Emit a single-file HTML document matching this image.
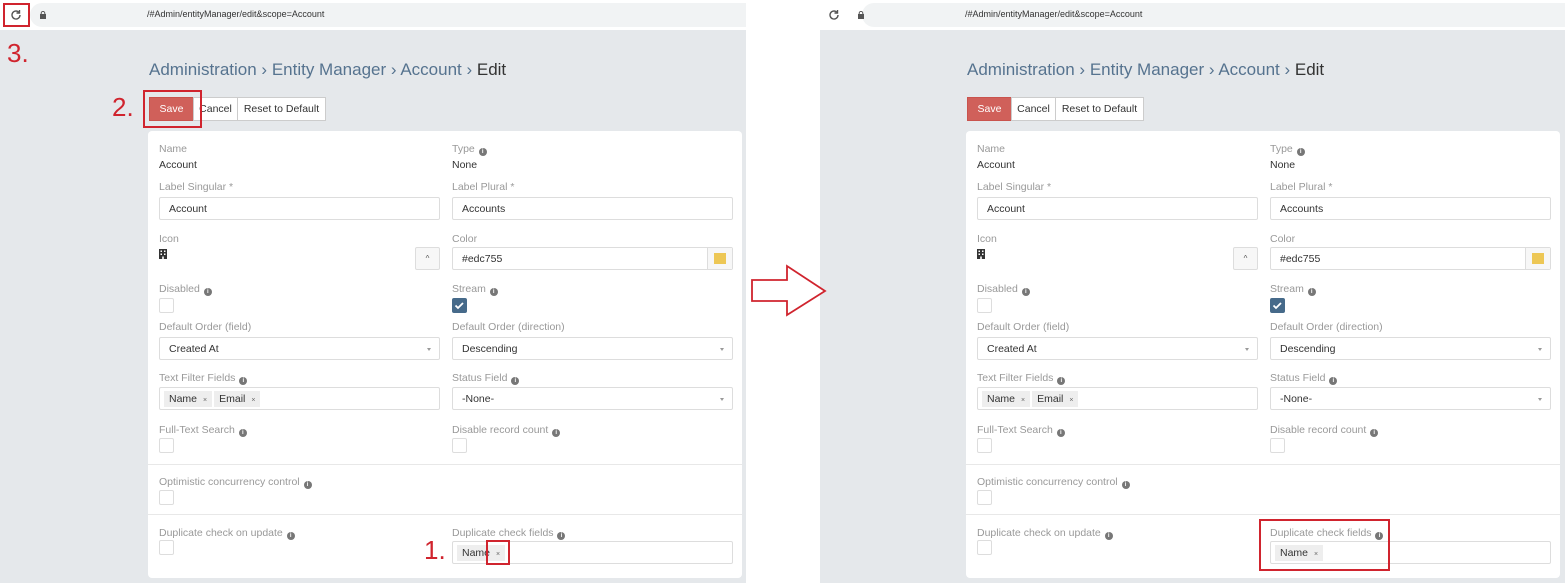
<!DOCTYPE html>
<html><head><meta charset="utf-8">
<style>
*{box-sizing:border-box;margin:0;padding:0}
body{width:1565px;height:583px;background:#fff;position:relative;overflow:hidden;font-family:"Liberation Sans",sans-serif;color:#333}
.p{position:absolute;top:0;width:746px;height:583px}
.bar{position:absolute;left:0;top:0;width:100%;height:30px;background:#fff}
.url{position:absolute;left:30px;top:3px;right:0;height:24px;background:#f1f3f4;border-radius:12px 0 0 12px}
.url span{position:absolute;left:117px;top:6px;font-size:9px;color:#333}
.gray{position:absolute;left:0;top:30px;width:100%;height:553px;background:#e5e8eb}
.a{position:absolute}
.bc{left:149px;top:60px;font-size:17px;color:#56738f;white-space:nowrap}
.bc b{font-weight:normal;color:#333}
.btn{top:97px;height:24px;font-size:10.5px;line-height:23px;text-align:center;border:1px solid #ccc;background:#fff;color:#333}
.card{left:148px;top:131px;width:594px;height:447px;background:#fff;border-radius:4px}
.lb{font-size:10.5px;color:#999;white-space:nowrap}
.v{font-size:10.5px;color:#333}
.in{height:23px;border:1px solid #ddd;border-radius:2px;font-size:10.5px;line-height:22px;padding-left:9px;color:#333;background:#fff}
.cb{width:15px;height:15px;border:1px solid #ddd;border-radius:2px;background:#fff}
.i{display:inline-block;width:8px;height:8px;border-radius:50%;background:#777;vertical-align:-0.5px;margin-left:1px;color:#fff;font-size:6px;line-height:8px;text-align:center;font-weight:bold}
.dv{height:1px;background:#e8e8e8;left:148px;width:594px}
.car{position:absolute;right:8px;top:10px;width:0;height:0;border-left:2.5px solid transparent;border-right:2.5px solid transparent;border-top:3px solid #999}
.tag{display:inline-block;background:#eee;padding:0 5px;height:16px;line-height:16px;margin-top:3px;margin-right:2px;font-size:10.5px}
.tag i{font-style:normal;font-size:7px;color:#666;margin-left:6px}
.red{border:2px solid #d0242e}
.num{color:#d0242e;font-size:26px}
</style></head><body>

<!-- LEFT PANEL -->
<div class="p" style="left:0">
<div class="bar"><div class="url"><span>/#Admin/entityManager/edit&amp;scope=Account</span></div></div>
<svg class="a" style="left:10px;top:9px" width="12" height="12" viewBox="0 0 12 12"><path d="M10 6a4 4 0 1 1-1.2-2.85" fill="none" stroke="#555" stroke-width="1.4"/><path d="M9.5 1v3h-3" fill="none" stroke="#555" stroke-width="1.4"/></svg>
<svg class="a" style="left:40px;top:11px" width="6" height="8"><rect x="0" y="3" width="6" height="5" fill="#555"/><path d="M1.2 3.5V2.2a1.8 1.8 0 0 1 3.6 0V3.5" fill="none" stroke="#555"/></svg>
<div class="gray"></div>
<div class="a bc">Administration › Entity Manager › Account › <b>Edit</b></div>
<div class="a btn" style="left:149px;width:45px;background:#d0605a;border-color:#c9534d;color:#fff">Save</div>
<div class="a btn" style="left:193px;width:45px">Cancel</div>
<div class="a btn" style="left:237px;width:89px">Reset to Default</div>
<div class="a card"></div>
<div class="a lb" style="left:159px;top:143px">Name</div><div class="a v" style="left:159px;top:159px">Account</div>
<div class="a lb" style="left:452px;top:143px">Type <span class="i">i</span></div><div class="a v" style="left:452px;top:159px">None</div>
<div class="a lb" style="left:159px;top:181px">Label Singular *</div>
<div class="a in" style="left:159px;top:197px;width:281px">Account</div>
<div class="a lb" style="left:452px;top:181px">Label Plural *</div>
<div class="a in" style="left:452px;top:197px;width:281px">Accounts</div>
<div class="a lb" style="left:159px;top:233px">Icon</div>
<svg class="a" style="left:159px;top:249px" width="8" height="10"><rect width="8" height="10" fill="#333"/><g fill="#fff"><rect x="1.5" y="1.5" width="1.5" height="1.5"/><rect x="5" y="1.5" width="1.5" height="1.5"/><rect x="1.5" y="4.5" width="1.5" height="1.5"/><rect x="5" y="4.5" width="1.5" height="1.5"/><rect x="3.2" y="7.5" width="1.6" height="2.5"/></g></svg>
<div class="a in" style="left:415px;top:247px;width:25px;background:#f7f7f7;padding:0;text-align:center;font-size:8px;color:#555">&#94;</div>
<div class="a lb" style="left:452px;top:233px">Color</div>
<div class="a in" style="left:452px;top:247px;width:281px">#edc755</div>
<div class="a" style="left:707px;top:248px;width:25px;height:21px;border-left:1px solid #ddd;background:#f7f7f7"><div style="margin:5px 6px;width:12px;height:11px;background:#edc755"></div></div>
<div class="a lb" style="left:159px;top:283px">Disabled <span class="i">i</span></div>
<div class="a cb" style="left:159px;top:298px"></div>
<div class="a lb" style="left:452px;top:283px">Stream <span class="i">i</span></div>
<div class="a" style="left:452px;top:298px;width:15px;height:15px;background:#466a8a;border-radius:2px"><svg width="15" height="15"><path d="M3.5 7.5l2.5 2.5 5-5" fill="none" stroke="#fff" stroke-width="1.8"/></svg></div>
<div class="a lb" style="left:159px;top:321px">Default Order (field)</div>
<div class="a in" style="left:159px;top:337px;width:281px">Created At<div class="car"></div></div>
<div class="a lb" style="left:452px;top:321px">Default Order (direction)</div>
<div class="a in" style="left:452px;top:337px;width:281px">Descending<div class="car"></div></div>
<div class="a lb" style="left:159px;top:372px">Text Filter Fields <span class="i">i</span></div>
<div class="a in" style="left:159px;top:387px;width:281px;padding-left:4px;line-height:16px"><span class="tag">Name<i>×</i></span><span class="tag">Email<i>×</i></span></div>
<div class="a lb" style="left:452px;top:372px">Status Field <span class="i">i</span></div>
<div class="a in" style="left:452px;top:387px;width:281px">-None-<div class="car"></div></div>
<div class="a lb" style="left:159px;top:424px">Full-Text Search <span class="i">i</span></div>
<div class="a cb" style="left:159px;top:438px"></div>
<div class="a lb" style="left:452px;top:424px">Disable record count <span class="i">i</span></div>
<div class="a cb" style="left:452px;top:438px"></div>
<div class="a dv" style="top:464px"></div>
<div class="a lb" style="left:159px;top:476px">Optimistic concurrency control <span class="i">i</span></div>
<div class="a cb" style="left:159px;top:490px"></div>
<div class="a dv" style="top:514px"></div>
<div class="a lb" style="left:159px;top:527px">Duplicate check on update <span class="i">i</span></div>
<div class="a cb" style="left:159px;top:540px"></div>
<div class="a lb" style="left:452px;top:527px">Duplicate check fields <span class="i">i</span></div>
<div class="a in" style="left:452px;top:541px;width:281px;padding-left:4px;line-height:16px"><span class="tag">Name<i>×</i></span></div>
</div>

<!-- annotations left -->
<div class="a red" style="left:3px;top:3px;width:27px;height:24px"></div>
<div class="a num" style="left:7px;top:38px">3.</div>
<div class="a num" style="left:112px;top:92px">2.</div>
<div class="a red" style="left:143px;top:90px;width:59px;height:38px"></div>
<div class="a num" style="left:424px;top:535px">1.</div>
<div class="a red" style="left:486px;top:540px;width:24px;height:25px"></div>

<!-- RIGHT PANEL -->
<div class="p" style="left:818px;width:747px">
<div class="bar"><div class="url" style="left:44px"><span style="left:103px">/#Admin/entityManager/edit&amp;scope=Account</span></div></div>
<svg class="a" style="left:10px;top:9px" width="12" height="12" viewBox="0 0 12 12"><path d="M10 6a4 4 0 1 1-1.2-2.85" fill="none" stroke="#555" stroke-width="1.4"/><path d="M9.5 1v3h-3" fill="none" stroke="#555" stroke-width="1.4"/></svg>
<svg class="a" style="left:40px;top:11px" width="6" height="8"><rect x="0" y="3" width="6" height="5" fill="#555"/><path d="M1.2 3.5V2.2a1.8 1.8 0 0 1 3.6 0V3.5" fill="none" stroke="#555"/></svg>
<div class="gray" style="left:2px"></div>
<div class="a bc">Administration › Entity Manager › Account › <b>Edit</b></div>
<div class="a btn" style="left:149px;width:45px;background:#d0605a;border-color:#c9534d;color:#fff">Save</div>
<div class="a btn" style="left:193px;width:45px">Cancel</div>
<div class="a btn" style="left:237px;width:89px">Reset to Default</div>
<div class="a card"></div>
<div class="a lb" style="left:159px;top:143px">Name</div><div class="a v" style="left:159px;top:159px">Account</div>
<div class="a lb" style="left:452px;top:143px">Type <span class="i">i</span></div><div class="a v" style="left:452px;top:159px">None</div>
<div class="a lb" style="left:159px;top:181px">Label Singular *</div>
<div class="a in" style="left:159px;top:197px;width:281px">Account</div>
<div class="a lb" style="left:452px;top:181px">Label Plural *</div>
<div class="a in" style="left:452px;top:197px;width:281px">Accounts</div>
<div class="a lb" style="left:159px;top:233px">Icon</div>
<svg class="a" style="left:159px;top:249px" width="8" height="10"><rect width="8" height="10" fill="#333"/><g fill="#fff"><rect x="1.5" y="1.5" width="1.5" height="1.5"/><rect x="5" y="1.5" width="1.5" height="1.5"/><rect x="1.5" y="4.5" width="1.5" height="1.5"/><rect x="5" y="4.5" width="1.5" height="1.5"/><rect x="3.2" y="7.5" width="1.6" height="2.5"/></g></svg>
<div class="a in" style="left:415px;top:247px;width:25px;background:#f7f7f7;padding:0;text-align:center;font-size:8px;color:#555">&#94;</div>
<div class="a lb" style="left:452px;top:233px">Color</div>
<div class="a in" style="left:452px;top:247px;width:281px">#edc755</div>
<div class="a" style="left:707px;top:248px;width:25px;height:21px;border-left:1px solid #ddd;background:#f7f7f7"><div style="margin:5px 6px;width:12px;height:11px;background:#edc755"></div></div>
<div class="a lb" style="left:159px;top:283px">Disabled <span class="i">i</span></div>
<div class="a cb" style="left:159px;top:298px"></div>
<div class="a lb" style="left:452px;top:283px">Stream <span class="i">i</span></div>
<div class="a" style="left:452px;top:298px;width:15px;height:15px;background:#466a8a;border-radius:2px"><svg width="15" height="15"><path d="M3.5 7.5l2.5 2.5 5-5" fill="none" stroke="#fff" stroke-width="1.8"/></svg></div>
<div class="a lb" style="left:159px;top:321px">Default Order (field)</div>
<div class="a in" style="left:159px;top:337px;width:281px">Created At<div class="car"></div></div>
<div class="a lb" style="left:452px;top:321px">Default Order (direction)</div>
<div class="a in" style="left:452px;top:337px;width:281px">Descending<div class="car"></div></div>
<div class="a lb" style="left:159px;top:372px">Text Filter Fields <span class="i">i</span></div>
<div class="a in" style="left:159px;top:387px;width:281px;padding-left:4px;line-height:16px"><span class="tag">Name<i>×</i></span><span class="tag">Email<i>×</i></span></div>
<div class="a lb" style="left:452px;top:372px">Status Field <span class="i">i</span></div>
<div class="a in" style="left:452px;top:387px;width:281px">-None-<div class="car"></div></div>
<div class="a lb" style="left:159px;top:424px">Full-Text Search <span class="i">i</span></div>
<div class="a cb" style="left:159px;top:438px"></div>
<div class="a lb" style="left:452px;top:424px">Disable record count <span class="i">i</span></div>
<div class="a cb" style="left:452px;top:438px"></div>
<div class="a dv" style="top:464px"></div>
<div class="a lb" style="left:159px;top:476px">Optimistic concurrency control <span class="i">i</span></div>
<div class="a cb" style="left:159px;top:490px"></div>
<div class="a dv" style="top:514px"></div>
<div class="a lb" style="left:159px;top:527px">Duplicate check on update <span class="i">i</span></div>
<div class="a cb" style="left:159px;top:540px"></div>
<div class="a lb" style="left:452px;top:527px">Duplicate check fields <span class="i">i</span></div>
<div class="a in" style="left:452px;top:541px;width:281px;padding-left:4px;line-height:16px"><span class="tag">Name<i>×</i></span></div>
</div>
<div class="a red" style="left:1259px;top:519px;width:131px;height:52px"></div>

<!-- arrow -->
<svg class="a" style="left:750px;top:264px" width="78" height="54"><path d="M2 16H37V2L75 27L37 51V37H2Z" fill="#fff" stroke="#d0242e" stroke-width="1.8"/></svg>
</body></html>
